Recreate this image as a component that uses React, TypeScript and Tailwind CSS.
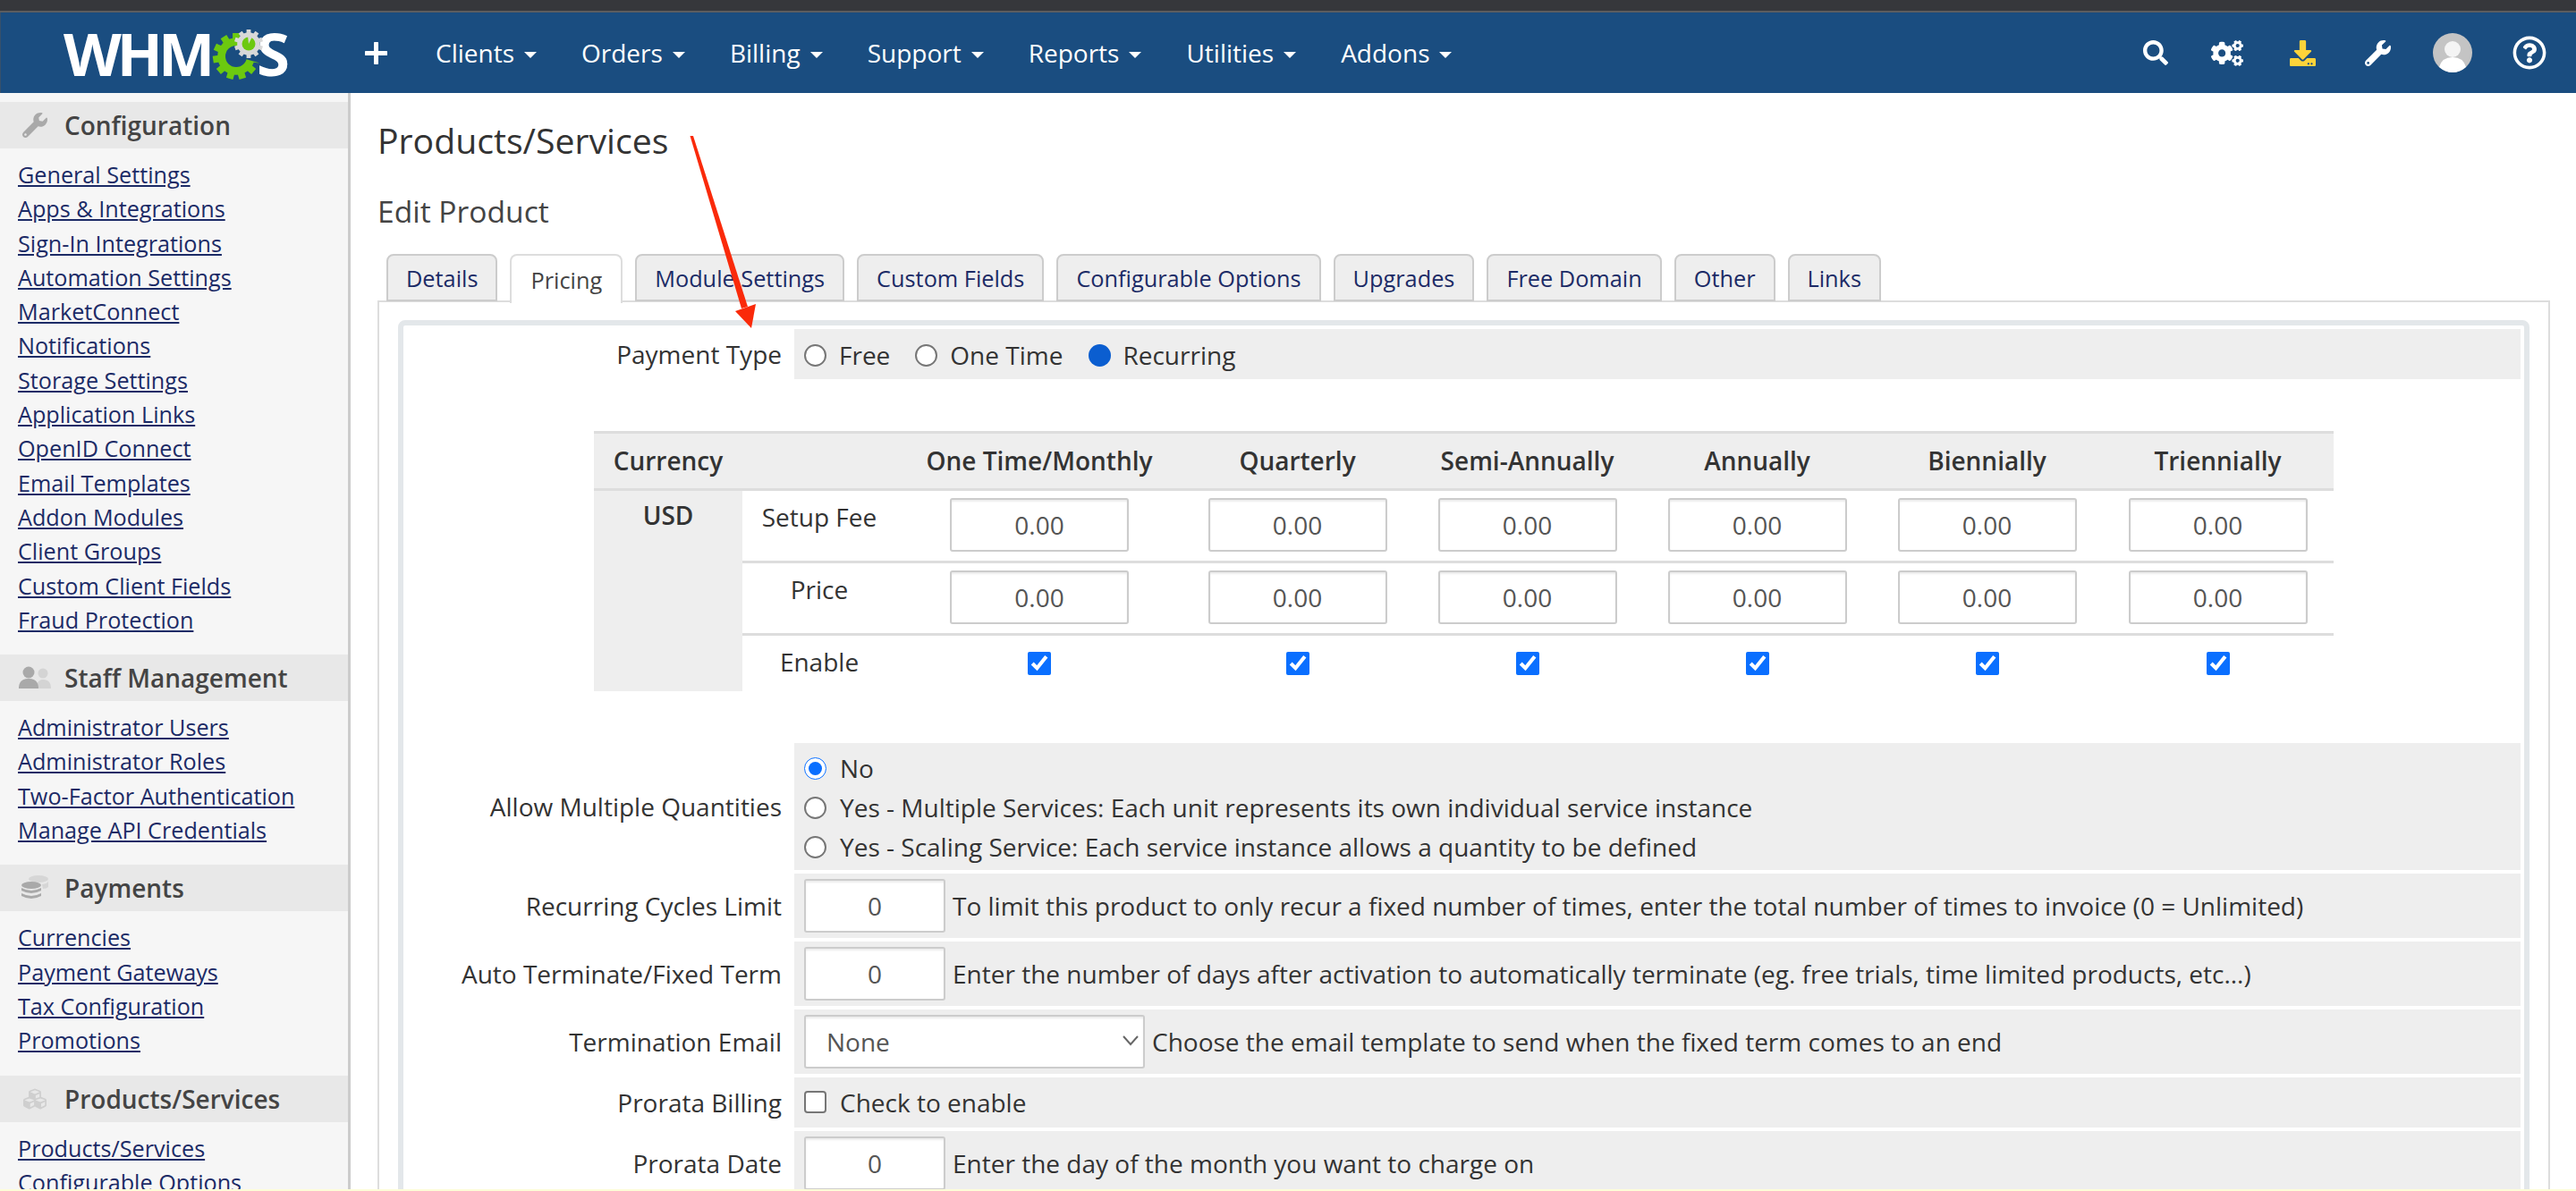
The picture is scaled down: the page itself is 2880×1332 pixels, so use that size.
import React from "react";
import { FaCogs, FaCubes, FaDownload, FaRegQuestionCircle, FaSearch, FaWrench } from "react-icons/fa";

const sections = [
  {
    title: "Configuration",
    icon: "wrench",
    links: [
      "General Settings",
      "Apps & Integrations",
      "Sign-In Integrations",
      "Automation Settings",
      "MarketConnect",
      "Notifications",
      "Storage Settings",
      "Application Links",
      "OpenID Connect",
      "Email Templates",
      "Addon Modules",
      "Client Groups",
      "Custom Client Fields",
      "Fraud Protection",
    ],
  },
  {
    title: "Staff Management",
    icon: "staff",
    links: ["Administrator Users", "Administrator Roles", "Two-Factor Authentication", "Manage API Credentials"],
  },
  {
    title: "Payments",
    icon: "coins",
    links: ["Currencies", "Payment Gateways", "Tax Configuration", "Promotions"],
  },
  {
    title: "Products/Services",
    icon: "cubes",
    links: ["Products/Services", "Configurable Options"],
  },
];

const navItems = ["Clients", "Orders", "Billing", "Support", "Reports", "Utilities", "Addons"];
const tabs = ["Details", "Pricing", "Module Settings", "Custom Fields", "Configurable Options", "Upgrades", "Free Domain", "Other", "Links"];
const cycles = ["One Time/Monthly", "Quarterly", "Semi-Annually", "Annually", "Biennially", "Triennially"];

function GearTeeth({ cx, cy, r, fill, count }: { cx: number; cy: number; r: number; fill: string; count: number }) {
  const teeth = Array.from({ length: count }, (_, i) => (i * 360) / count);
  return (
    <g>
      {teeth.map((a) => (
        <rect key={a} x={cx - r * 0.15} y={cy - r} width={r * 0.3} height={r * 0.4} fill={fill} transform={`rotate(${a} ${cx} ${cy})`} />
      ))}
      <circle cx={cx} cy={cy} r={r * 0.8} fill={fill} />
    </g>
  );
}

function Logo() {
  return (
    <div className="relative w-[262px] h-[60px] ml-[70px] flex items-center font-['Open_Sans',sans-serif] font-bold text-white text-[67px] tracking-[-5px] leading-none">
      <span>WHM</span>
      <svg className="absolute left-[166px] top-[-8px]" width="64" height="76" viewBox="0 0 64 76">
        <GearTeeth cx={27} cy={42} r={26} fill="#6cc90f" count={11} />
        <circle cx={27} cy={42} r={12} fill="#1a4d80" />
        <path d="M27 42 L62 22 L62 52 Z" fill="#1a4d80" />
      </svg>
      <span className="absolute left-[216px] top-[-3px]">S</span>
      <svg className="absolute left-[166px] top-[-8px]" width="64" height="50" viewBox="0 0 64 50">
        <GearTeeth cx={41} cy={28} r={16} fill="#d8d8d8" count={10} />
        <circle cx={41} cy={28} r={7.5} fill="#6cc90f" />
        <path d="M41 28 L40 19 L45 20 Z" fill="#d8d8d8" />
      </svg>
    </div>
  );
}

function SectionIcon({ name }: { name: string }) {
  if (name === "wrench") {
    return <FaWrench className="w-[28px] h-[28px] text-[#a9a9a9]" />;
  }
  if (name === "staff") {
    return (
      <svg width="36" height="26" viewBox="0 0 36 26">
        <circle cx="27" cy="8" r="5.5" fill="#d4d4d4" />
        <path d="M20 25 Q20 15 27 15 Q36 15 36 25 Z" fill="#d4d4d4" />
        <circle cx="11" cy="7" r="6.5" fill="#a9a9a9" />
        <path d="M0 25 Q0 14 11 14 Q22 14 22 25 Z" fill="#a9a9a9" />
      </svg>
    );
  }
  if (name === "coins") {
    return (
      <svg width="30" height="28" viewBox="0 0 30 28">
        <ellipse cx="19" cy="4" rx="11" ry="4" fill="#d6d6d6" />
        <path d="M23 10 Q30 9 30 6 L30 13 Q28 15 24 15 Z" fill="#d6d6d6" />
        <ellipse cx="11" cy="11" rx="11" ry="4" fill="#a9a9a9" />
        <path d="M0 14 Q11 20 22 14 L22 17 Q11 23 0 17 Z" fill="#a9a9a9" />
        <path d="M0 20 Q11 26 22 20 L22 23 Q11 29 0 23 Z" fill="#a9a9a9" />
      </svg>
    );
  }
  return <FaCubes className="w-[30px] h-[26px] text-[#cfcfcf]" />;
}

function Sidebar() {
  return (
    <aside className="w-[392px] shrink-0 bg-[#f6f6f6] border-r-[3px] border-[#cccccc] pt-[10px]">
      {sections.map((s) => (
        <div key={s.title} className="mb-[12px]">
          <div className="h-[52px] bg-[#e8e8e8] flex items-center text-[#444444] font-semibold text-[28px]">
            <span className="w-[72px] flex justify-center pl-[14px] pr-[8px] shrink-0">
              <SectionIcon name={s.icon} />
            </span>
            {s.title}
          </div>
          <ul className="pt-[9px] pb-[9px] pl-[20px]">
            {s.links.map((l) => (
              <li key={l} className="h-[38.3px] leading-[38px]">
                <a href="#" className="text-[#1c2b66] underline text-[25.2px]">
                  {l}
                </a>
              </li>
            ))}
          </ul>
        </div>
      ))}
    </aside>
  );
}

function Row({ label, children, className = "" }: { label: string; children: React.ReactNode; className?: string }) {
  return (
    <div className="flex mb-[4px]">
      <div className="w-[437px] shrink-0 pr-[14px] text-right self-center text-[#333333]">{label}</div>
      <div className={`flex-1 bg-[#eeeeee] flex items-center pl-[11px] text-[#333333] ${className}`}>{children}</div>
    </div>
  );
}

function NumInput({ value, className }: { value: string; className: string }) {
  return (
    <input
      readOnly
      value={value}
      className={`${className} h-[60px] bg-white border-2 border-[#cccccc] rounded-[3px] shadow-[inset_0_2px_2px_rgba(0,0,0,0.08)] text-center text-[#555555] outline-none`}
    />
  );
}

function Radio({ checked = false }: { checked?: boolean }) {
  if (checked) {
    return <input type="radio" readOnly checked className="w-[25px] h-[25px] m-0 accent-[#0a6fff] shrink-0" />;
  }
  return <input type="radio" readOnly checked={false} className="appearance-none w-[25px] h-[25px] m-0 rounded-full bg-white border-2 border-[#767676] shrink-0" />;
}

function PricingTable() {
  const rows = ["Setup Fee", "Price"];
  return (
    <table className="ml-[213px] w-[1945px] table-fixed border-collapse text-[#333333]">
      <colgroup>
        <col className="w-[166px]" />
        <col className="w-[172px]" />
        <col className="w-[320px]" />
        <col className="w-[257px]" />
        <col className="w-[257px]" />
        <col className="w-[257px]" />
        <col className="w-[257px]" />
        <col className="w-[259px]" />
      </colgroup>
      <thead>
        <tr className="h-[64px] bg-[#eeeeee] border-y-[3px] border-[#dddddd] font-semibold">
          <th className="font-semibold text-center pb-[2px]">Currency</th>
          <th></th>
          {cycles.map((c) => (
            <th key={c} className="font-semibold text-center pb-[2px]">
              {c}
            </th>
          ))}
        </tr>
      </thead>
      <tbody>
        {rows.map((r, i) => (
          <tr key={r} className="h-[81px] border-b-[3px] border-[#dddddd]">
            {i === 0 && (
              <td rowSpan={3} className="bg-[#eeeeee] align-top text-center font-semibold pt-[6px]">
                USD
              </td>
            )}
            <td className="text-center pb-[20px]">{r}</td>
            {cycles.map((c) => (
              <td key={c} className="text-center pb-[3px]">
                <NumInput value="0.00" className="w-[200px]" />
              </td>
            ))}
          </tr>
        ))}
        <tr className="h-[63px]">
          <td className="text-center pb-[4px]">Enable</td>
          {cycles.map((c) => (
            <td key={c} className="text-center pb-[6px]">
              <input type="checkbox" readOnly checked className="w-[26px] h-[26px] m-0 accent-[#0a6fff] align-middle" />
            </td>
          ))}
        </tr>
      </tbody>
    </table>
  );
}

export default function App() {
  return (
    <div className="relative w-[2880px] h-[1332px] overflow-hidden bg-white font-['Open_Sans',sans-serif] text-[28px] flex flex-col">
      <div className="h-[12px] bg-[#36373b] shrink-0" />
      <div className="h-[2px] bg-[#5c5d60] shrink-0" />
      <header className="h-[90px] shrink-0 bg-[#1a4d80] flex items-center text-white border-l-[1px] border-[#37506b]">
        <Logo />
        <svg className="ml-[75px] mr-[54px] shrink-0" width="25" height="25" viewBox="0 0 25 25">
          <path d="M12.5 1.5 V23.5 M1.5 12.5 H23.5" stroke="white" strokeWidth="5" strokeLinecap="round" />
        </svg>
        <nav className="flex gap-[50px]">
          {navItems.map((n) => (
            <a key={n} className="flex items-center gap-[11px]">
              {n}
              <span className="w-0 h-0 mt-[4px] border-x-[7px] border-x-transparent border-t-[7px] border-t-white" />
            </a>
          ))}
        </nav>
        <div className="ml-auto flex items-center pr-[33px]">
          <FaSearch className="w-[28px] h-[28px]" />
          <FaCogs className="w-[36px] h-[29px] ml-[48px]" />
          <FaDownload className="w-[29px] h-[29px] ml-[52px] text-[#fdd33a]" />
          <FaWrench className="w-[29px] h-[29px] ml-[55px]" />
          <svg className="ml-[47px]" width="44" height="44" viewBox="0 0 44 44">
            <circle cx="22" cy="22" r="22" fill="#c4c4c4" />
            <circle cx="22" cy="18" r="9" fill="#f4f4f4" />
            <path d="M7 38 Q10 27 22 27 Q34 27 37 38 Q30 44 22 44 Q14 44 7 38 Z" fill="#ffffff" />
          </svg>
          <FaRegQuestionCircle className="w-[38px] h-[38px] ml-[45px]" />
        </div>
      </header>

      <div className="flex flex-1 min-h-0">
        <Sidebar />
        <main className="flex-1 min-w-0 pl-[30px] pr-[29px] text-[#333333]">
          <h1 className="text-[39.2px] leading-[54px] pt-[26px] text-[#333333]">Products/Services</h1>
          <h2 className="text-[33.6px] leading-[44px] pt-[30px] text-[#444444]">Edit Product</h2>
          <div className="flex gap-[14px] pl-[10px] pt-[26px] relative z-10 text-[25.3px]">
            {tabs.map((t) => (
              <div
                key={t}
                className={
                  t === "Pricing"
                    ? "h-[55px] px-[21px] pt-[3px] flex items-center bg-white border-2 border-b-0 border-[#dddddd] rounded-t-[8px] text-[#444444]"
                    : "h-[53px] px-[20px] pt-[3px] flex items-center bg-[#eeeeee] border-2 border-[#cccccc] rounded-t-[8px] text-[#1c2b66]"
                }
              >
                {t}
              </div>
            ))}
          </div>
          <div className="border-2 border-[#dddddd] px-[21px] pt-[20px] -mt-[3px] h-[1100px]">
            <fieldset className="border-[6px] border-[#e3e7ea] rounded-[8px] pt-[4px] pr-[4px] pb-[40px]">
              <Row label="Payment Type" className="h-[56px] pt-[2px]">
                <Radio />
                <span className="ml-[14px] mr-[28px]">Free</span>
                <Radio />
                <span className="ml-[14px] mr-[29px]">One Time</span>
                <input type="radio" readOnly checked className="appearance-none w-[25px] h-[25px] m-0 rounded-full bg-[#0b5ed0]" />
                <span className="ml-[13px]">Recurring</span>
              </Row>
              <div className="pt-[54px] pb-[58px]">
                <PricingTable />
              </div>
              <Row label="Allow Multiple Quantities" className="h-[142px] flex-col !items-start justify-center gap-[17px] pt-[3px]">
                <label className="flex items-center gap-[15px] leading-[27px]">
                  <Radio checked /> No
                </label>
                <label className="flex items-center gap-[15px] leading-[27px]">
                  <Radio /> Yes - Multiple Services: Each unit represents its own individual service instance
                </label>
                <label className="flex items-center gap-[15px] leading-[27px]">
                  <Radio /> Yes - Scaling Service: Each service instance allows a quantity to be defined
                </label>
              </Row>
              <Row label="Recurring Cycles Limit" className="h-[72px] gap-[8px]">
                <NumInput value="0" className="w-[158px]" />
                To limit this product to only recur a fixed number of times, enter the total number of times to invoice (0 = Unlimited)
              </Row>
              <Row label="Auto Terminate/Fixed Term" className="h-[72px] gap-[8px]">
                <NumInput value="0" className="w-[158px]" />
                Enter the number of days after activation to automatically terminate (eg. free trials, time limited products, etc...)
              </Row>
              <Row label="Termination Email" className="h-[72px] gap-[8px]">
                <div className="relative">
                  <select className="appearance-none block w-[381px] h-[60px] bg-white border-2 border-[#cccccc] rounded-[3px] pl-[23px] text-[#555555] outline-none shadow-[inset_0_2px_2px_rgba(0,0,0,0.08)]">
                    <option>None</option>
                  </select>
                  <svg className="absolute right-[7px] top-[23px]" width="18" height="12" viewBox="0 0 18 12">
                    <path d="M1 1 L9 10 L17 1" stroke="#666666" strokeWidth="2" fill="none" />
                  </svg>
                </div>
                Choose the email template to send when the fixed term comes to an end
              </Row>
              <Row label="Prorata Billing" className="h-[56px] gap-[15px]">
                <input type="checkbox" readOnly checked={false} className="appearance-none w-[25px] h-[25px] m-0 bg-white border-2 border-[#767676] rounded-[4px]" />
                Check to enable
              </Row>
              <Row label="Prorata Date" className="h-[72px] gap-[8px]">
                <NumInput value="0" className="w-[158px]" />
                Enter the day of the month you want to charge on
              </Row>
            </fieldset>
          </div>
        </main>
      </div>

      {/* annotation arrow from the original screenshot */}
      <svg className="absolute left-0 top-0 pointer-events-none z-20" width="2880" height="1332">
        <path d="M771.5 152 L775 152 L836 343 L829 345 Z" fill="#fa2a0a" />
        <path d="M822 348 L845 340 L840 367 Z" fill="#fa2a0a" />
      </svg>
      <div className="absolute left-0 right-0 bottom-0 h-[2px] bg-[#fdfdd8]" />
    </div>
  );
}
